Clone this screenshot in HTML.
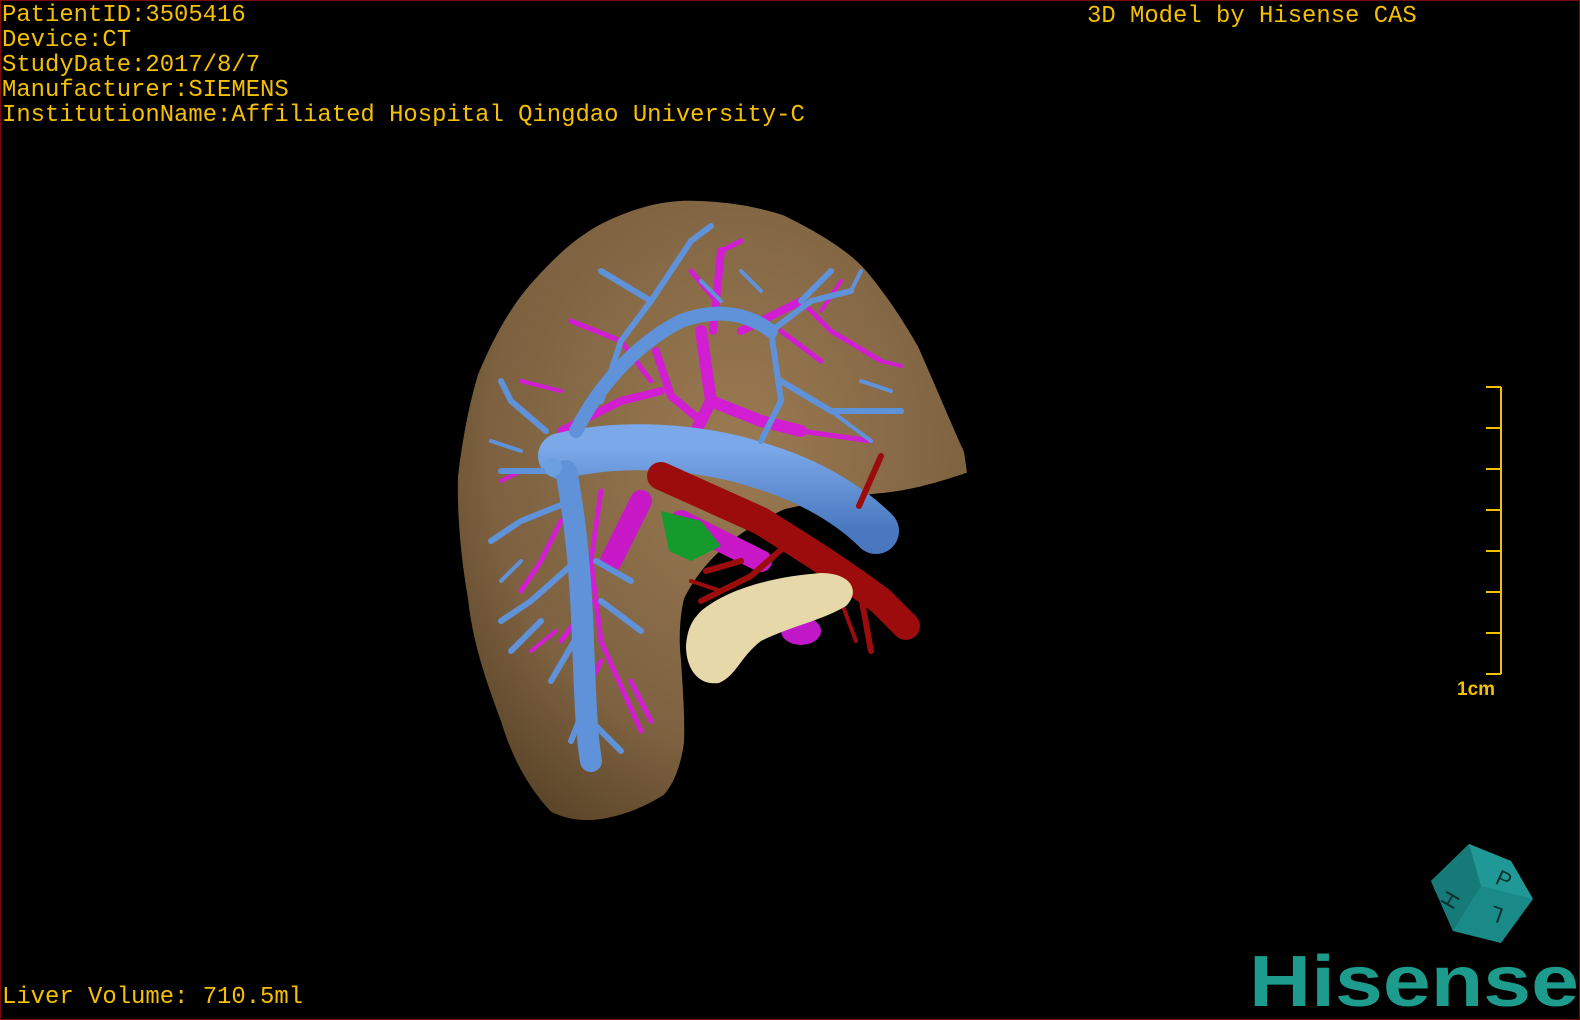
<!DOCTYPE html>
<html><head><meta charset="utf-8"><style>
html,body{margin:0;padding:0;background:#000;}
#v{position:relative;width:1580px;height:1020px;background:#000;overflow:hidden;box-sizing:border-box;border:1px solid #7a0a0a;}
.t{position:absolute;font-family:"Liberation Mono",monospace;font-size:23.9px;color:#f5c000;line-height:25px;white-space:pre;}
</style></head><body><div id="v">
<div class="t" style="left:1px;top:2px">PatientID:3505416
Device:CT
StudyDate:2017/8/7
Manufacturer:SIEMENS
InstitutionName:Affiliated Hospital Qingdao University-C</div>
<div class="t" style="left:1086px;top:3px">3D Model by Hisense CAS</div>
<div class="t" style="left:1px;top:984px">Liver Volume: 710.5ml</div>
<svg width="1580" height="1020" style="position:absolute;left:0;top:0">
<defs>
<radialGradient id="lg" cx="0.55" cy="0.4" r="0.7"><stop offset="0" stop-color="#9a7a52"/><stop offset="0.7" stop-color="#7d6140"/><stop offset="1" stop-color="#5a4428"/></radialGradient>
<linearGradient id="bg" x1="0" y1="0" x2="0" y2="1"><stop offset="0" stop-color="#7aa8e8"/><stop offset="1" stop-color="#4a78c0"/></linearGradient>
</defs>
<!-- liver -->
<path transform="matrix(1,0,0,1.2245,0,-42.7)" d="M683,198 C730,198 760,204 783,210 C820,225 850,240 867,257 C890,280 905,300 917,317 C935,350 950,380 963,403 L966,420 C930,430 905,435 877,437 C840,440 810,445 783,450 C730,470 700,495 683,523 C678,540 678,560 680,573 C682,600 684,620 683,640 C680,660 672,675 663,683 C640,695 620,700 600,703 C580,705 565,703 550,697 C525,675 510,650 500,623 C485,590 472,560 467,523 C460,490 456,455 457,423 C462,390 468,365 477,340 C495,305 512,282 533,263 C555,243 575,228 600,217 C630,205 655,199 683,198 Z" fill="url(#lg)"/>
<!-- magenta vessels -->
<g stroke="#d21ed2" fill="none" stroke-linecap="round">
<path d="M700,330 L710,400 L690,440 M710,400 L760,420 L800,430" stroke-width="12"/>
<path d="M655,350 L670,395 L700,420 M720,250 L712,330 M740,330 L800,300 M660,390 L620,400 L560,430" stroke-width="8"/>
<path d="M570,320 L620,340 L650,380 M800,300 L830,330 L880,360 M800,430 L870,440 M720,250 L740,240 M715,300 L690,270 M780,330 L820,360 M600,490 L590,560 L600,640 L640,730 M560,520 L540,560 L520,590 M590,600 L560,640 M600,660 L580,700 M630,680 L650,720" stroke-width="5"/>
<path d="M640,500 L630,520 L610,560 M680,520 L760,560" stroke-width="22" stroke="#c818c8"/>
<path d="M520,470 L500,480 M520,380 L560,390 M840,280 L820,310 M880,360 L900,365 M555,630 L530,650" stroke-width="4"/>
<ellipse cx="800" cy="630" rx="20" ry="14" fill="#c018c8" stroke="none"/>
</g>
<!-- blue vessels -->
<g stroke="#5f92d8" fill="none" stroke-linecap="round">
<path d="M560,455 C620,440 700,445 760,465 C810,480 850,505 875,530" stroke="url(#bg)" stroke-width="46"/>
<path d="M565,470 C575,520 580,580 582,640 C584,690 585,730 590,760" stroke-width="22"/>
<path d="M575,430 C600,380 640,340 680,320 C720,305 750,315 770,330" stroke-width="14"/>
<path d="M600,400 L620,340 L650,300 L690,240 L710,225 M650,300 L600,270 M770,330 L780,400 L760,440 M770,330 L810,300 L850,290 M780,380 L830,410 L900,410 M800,300 L830,270 M545,430 L510,400 L500,380 M545,470 L500,470 M570,500 L520,520 L490,540 M575,560 L530,600 L500,620 M585,620 L550,680 M590,690 L570,740 M600,600 L640,630 M595,560 L630,580 M590,720 L620,750 M540,620 L510,650" stroke-width="6"/>
<path d="M830,410 L870,440 M850,290 L860,270 M700,280 L720,300 M740,270 L760,290 M860,380 L890,390 M520,450 L490,440 M520,560 L500,580" stroke-width="4"/>
<circle cx="552" cy="466" r="9" fill="#6c9fe0" stroke="none"/>
</g>
<!-- green -->
<path d="M660,510 L700,520 L720,545 L690,560 L668,550 Z" fill="#159a2c"/>
<!-- red artery -->
<g stroke="#9c0c0c" fill="none" stroke-linecap="round">
<path d="M660,475 L760,520 C800,545 840,570 880,600 L905,625" stroke-width="28"/>
<path d="M880,455 L858,505 M790,540 L750,575 L720,590 L700,600 M740,560 L705,570 M860,595 L870,650" stroke-width="6"/>
<path d="M720,590 L690,580 M840,600 L855,640" stroke-width="4"/>
</g>
<!-- beige -->
<path d="M700,610 C730,585 780,575 820,572 C850,572 860,590 845,605 C820,620 790,625 760,640 C740,655 735,675 718,682 C695,685 685,665 685,645 C686,630 690,620 700,610 Z" fill="#e6d8a8"/>
<!-- scale bar -->
<g stroke="#f5c000" stroke-width="2" fill="none">
<path d="M1500,386 L1500,673"/>
<path d="M1485,386 L1500,386 M1485,427 L1500,427 M1485,468 L1500,468 M1485,509 L1500,509 M1485,550 L1500,550 M1485,591 L1500,591 M1485,632 L1500,632 M1485,673 L1500,673"/>
</g>
<text x="1456" y="694" font-family="Liberation Sans, sans-serif" font-size="19" font-weight="bold" fill="#f5c000">1cm</text>
<!-- cube -->
<polygon points="1468,843 1510,860 1532,898 1500,942 1452,930 1430,880" fill="#1a8a88"/>
<polygon points="1468,843 1510,860 1532,898 1480,885" fill="#1f9896"/>
<polygon points="1430,880 1468,843 1480,885 1452,930" fill="#157a78"/>
<text x="1493" y="882" font-family="Liberation Sans, sans-serif" font-size="22" fill="#0a3030" transform="rotate(25 1493 882)">P</text>
<text x="1445" y="902" font-family="Liberation Sans, sans-serif" font-size="22" fill="#0a3030" transform="rotate(-60 1455 900)">H</text>
<text x="1490" y="918" font-family="Liberation Sans, sans-serif" font-size="22" fill="#0a3030" transform="rotate(200 1496 912)">L</text>
<!-- Hisense -->
<text x="1248" y="1005" font-family="Liberation Sans, sans-serif" font-size="72" font-weight="bold" fill="#1d9c8e" textLength="330" lengthAdjust="spacingAndGlyphs">Hisense</text>
</svg>
</div></body></html>
